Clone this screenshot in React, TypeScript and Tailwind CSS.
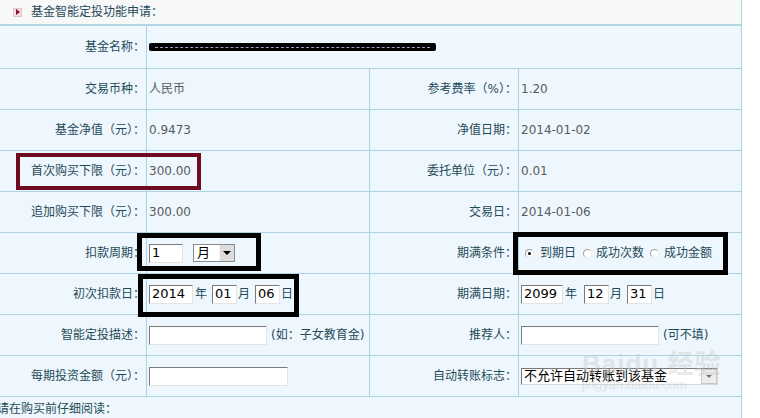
import React from "react";

/* ─────────────  small form bits ───────────── */
const Box = ({ value = "", w }: { value?: string; w: string }) => (
  <span
    className={`inline-flex items-center h-[19px] bg-white border border-t-[#7a7a7a] border-l-[#7a7a7a] border-b-[#e4e4e4] border-r-[#e4e4e4] pl-[2px] text-[13px] text-black ${w}`}
  >
    {value}
  </span>
);

const Radio = ({ checked }: { checked?: boolean }) => (
  <span className="inline-flex items-center justify-center w-[9px] h-[9px] rounded-full border border-t-[#a0a0a0] border-l-[#a0a0a0] border-b-[#ececec] border-r-[#ececec] bg-white">
    {checked && <span className="w-[3px] h-[3px] rounded-full bg-black" />}
  </span>
);

const Label = ({ children }: { children: React.ReactNode }) => (
  <div className="flex items-center justify-end pr-[1px] text-[#1f4a58] border-r border-[#acd3e2]">
    {children}
  </div>
);

const Value = ({ children, last }: { children?: React.ReactNode; last?: boolean }) => (
  <div
    className={`flex items-center pl-[2px] text-[#5a5a5a] ${
      last ? "" : "border-r border-[#acd3e2]"
    }`}
  >
    {children}
  </div>
);

const Row = ({ children }: { children: React.ReactNode }) => (
  <div className="grid grid-cols-[147px_223px_149px_223px] border-b border-[#acd3e2] h-[41px]">
    {children}
  </div>
);

const Unit = ({ children, cls }: { children: React.ReactNode; cls: string }) => (
  <span className={`text-[#1f4a58] ${cls}`}>{children}</span>
);

/* ─────────────  page ───────────── */
export default function App() {
  return (
    <div
      className="relative w-[760px] h-[418px] overflow-hidden bg-white text-[12px]"
      style={{ fontFamily: '"DejaVu Sans", "Noto Sans CJK SC", sans-serif' }}
    >
      <div className="w-[742px] border-r border-[#acd3e2]">
        {/* header */}
        <div className="flex items-center h-[26px] bg-[#f7f8f8] border-b-2 border-[#b4d6e4] pl-[13px] gap-[9px] text-[#1f4a58]">
          <span className="flex items-center justify-center w-[9px] h-[9px] bg-[#f3dde3] border border-[#e6c3cc]">
            <span className="w-0 h-0 border-y-[3px] border-y-transparent border-l-[4px] border-l-[#8b1030]" />
          </span>
          基金智能定投功能申请：
        </div>

        <div className="bg-[#eef7fd]">
          {/* fund name (redacted in the shot) */}
          <div className="grid grid-cols-[147px_595px] border-b border-[#acd3e2] h-[43px]">
            <Label>基金名称：</Label>
            <div className="flex items-center pl-[2px]">
              <div className="w-[287px] h-[8px] bg-black rounded-[2px] flex items-center px-[6px]">
                <div className="w-full border-t border-dashed border-[#9aa0c0]" />
              </div>
            </div>
          </div>

          <Row>
            <Label>交易币种：</Label>
            <Value>人民币</Value>
            <Label>参考费率（%）：</Label>
            <Value last>1.20</Value>
          </Row>
          <Row>
            <Label>基金净值（元）：</Label>
            <Value>0.9473</Value>
            <Label>净值日期：</Label>
            <Value last>2014-01-02</Value>
          </Row>
          <Row>
            <Label>首次购买下限（元）：</Label>
            <Value>300.00</Value>
            <Label>委托单位（元）：</Label>
            <Value last>0.01</Value>
          </Row>
          <Row>
            <Label>追加购买下限（元）：</Label>
            <Value>300.00</Value>
            <Label>交易日：</Label>
            <Value last>2014-01-06</Value>
          </Row>
          <Row>
            <Label>扣款周期：</Label>
            <Value>
              <Box value="1" w="w-[34px]" />
              <span className="ml-[10px] inline-flex items-center h-[18px] w-[42px] bg-white border border-[#8a8a8a] text-[13px] text-black">
                <span className="flex-1 pl-[3px]">月</span>
                <span className="flex items-center justify-center w-[15px] h-full bg-[#dcdcdc] border-l border-[#f4f4f4]">
                  <span className="w-0 h-0 border-x-[4px] border-x-transparent border-t-[4px] border-t-black" />
                </span>
              </span>
            </Value>
            <Label>期满条件：</Label>
            <Value last>
              <span className="flex items-center ml-[4px] text-[#1f4a58]">
                <Radio checked />
                <span className="ml-[6px] mr-[7px]">到期日</span>
                <Radio />
                <span className="ml-[4px] mr-[6px]">成功次数</span>
                <Radio />
                <span className="ml-[5px]">成功金额</span>
              </span>
            </Value>
          </Row>
          <Row>
            <Label>初次扣款日：</Label>
            <Value>
              <Box value="2014" w="w-[44px]" />
              <Unit cls="ml-[2px] mr-[5px]">年</Unit>
              <Box value="01" w="w-[25px]" />
              <Unit cls="ml-[1px] mr-[5px]">月</Unit>
              <Box value="06" w="w-[25px]" />
              <Unit cls="ml-[1px]">日</Unit>
            </Value>
            <Label>期满日期：</Label>
            <Value last>
              <Box value="2099" w="w-[42px]" />
              <Unit cls="ml-[2px] mr-[7px]">年</Unit>
              <Box value="12" w="w-[25px]" />
              <Unit cls="ml-[1px] mr-[5px]">月</Unit>
              <Box value="31" w="w-[25px]" />
              <Unit cls="ml-[1px]">日</Unit>
            </Value>
          </Row>
          <Row>
            <Label>智能定投描述：</Label>
            <Value>
              <Box w="w-[118px]" />
              <Unit cls="ml-[4px]">(如：子女教育金)</Unit>
            </Value>
            <Label>推荐人：</Label>
            <Value last>
              <Box w="w-[138px]" />
              <Unit cls="ml-[4px]">(可不填)</Unit>
            </Value>
          </Row>
          <Row>
            <Label>每期投资金额（元）：</Label>
            <Value>
              <Box w="w-[139px]" />
            </Value>
            <Label>自动转账标志：</Label>
            <Value last>
              <span className="inline-flex items-center h-[17px] w-[197px] bg-white border border-t-[#7a7a7a] border-l-[#7a7a7a] border-b-[#d8d8d8] border-r-[#d8d8d8] text-[13px] text-black">
                <span className="flex-1 pl-[2px] whitespace-nowrap">不允许自动转账到该基金</span>
                <span className="flex items-center justify-center w-[16px] h-[15px] bg-[#ececec] border border-[#c8c8c8]">
                  <span className="w-0 h-0 border-x-[3px] border-x-transparent border-t-[3px] border-t-[#777]" />
                </span>
              </span>
            </Value>
          </Row>

          <div className="h-[21px] pt-[3px] -ml-[3px] text-[#1f4a58]">请在购买前仔细阅读：</div>
        </div>
      </div>

      {/* annotation boxes drawn over the form */}
      <div className="absolute left-[16px] top-[153px] w-[185px] h-[37px] border-[4px] border-[#6e0b1f]" />
      <div className="absolute left-[137px] top-[233px] w-[124px] h-[38px] border-[5px] border-black" />
      <div className="absolute left-[138px] top-[274px] w-[161px] h-[43px] border-[5px] border-black" />
      <div className="absolute left-[513px] top-[232px] w-[215px] h-[43px] border-[5px] border-black" />

      {/* watermark */}
      <div
        className="absolute left-[582px] top-[350px] flex flex-col items-start opacity-40 text-[#c9c9c9] pointer-events-none"
        style={{ fontFamily: '"Liberation Sans", "Noto Sans CJK SC", sans-serif' }}
      >
        <span className="text-[26px] leading-[28px] font-bold tracking-[1px]">Baidu 经验</span>
        <span className="text-[13px] leading-[14px]">jingyan.baidu.com</span>
      </div>
    </div>
  );
}
